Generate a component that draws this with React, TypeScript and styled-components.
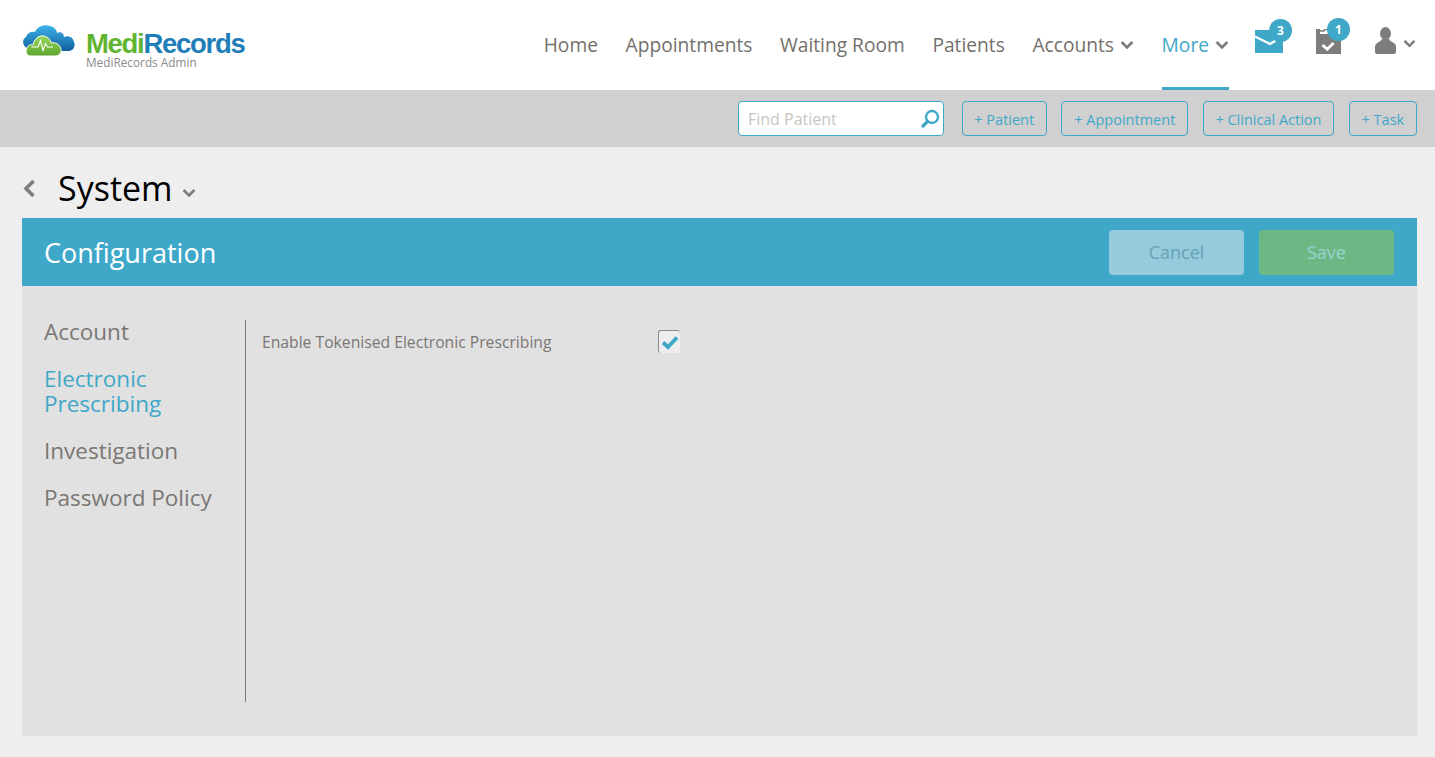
import React from 'react';
import styled, { createGlobalStyle } from 'styled-components';

const NAV_ITEMS = ['Home', 'Appointments', 'Waiting Room', 'Patients'];
const ACTIONS = ['+ Patient', '+ Appointment', '+ Clinical Action', '+ Task'];
const SIDE_ITEMS = ['Account', 'Electronic Prescribing', 'Investigation', 'Password Policy'];

const Chevron = ({ size = 14, color = '#7d7d7d' }: { size?: number; color?: string }) => (
  <svg width={size} height={size * 0.7} viewBox="0 0 14 10">
    <path d="M1.5 2 L7 7.5 L12.5 2" fill="none" stroke={color} strokeWidth="2.8" />
  </svg>
);

const App = () => {
  return (
    <Page>
      <GlobalStyle />
      <Header>
        <Logo>
          <svg width="54" height="32" viewBox="0 0 54 32">
            <defs>
              <linearGradient id="cloudBlue" x1="0" y1="0" x2="0" y2="1">
                <stop offset="0" stopColor="#3fb2e8" />
                <stop offset="1" stopColor="#0f5f9e" />
              </linearGradient>
              <linearGradient id="cloudGreen" x1="0" y1="0" x2="0" y2="1">
                <stop offset="0" stopColor="#9ad75a" />
                <stop offset="1" stopColor="#5aa62c" />
              </linearGradient>
            </defs>
            <path
              d="M5 23 C0 21 0 14 4 12 C5 8 9 6 13 7 C15 2 22 -1 28 1 C32 2 35 5 35 8 C38 6 42 8 42 12 C46 10 51 12 52 17 C54 21 51 26 46 26 L8 26 Z"
              fill="url(#cloudBlue)"
            />
            <path
              d="M9 31 C4 31 3 26 5 23 C6 20 9 19 11 20 C12 14 17 10 22 11 C26 12 29 15 29 18 C33 17 38 19 39 24 C40 28 37 31 33 31 Z"
              fill="url(#cloudGreen)"
              stroke="#ffffff"
              strokeWidth="1"
            />
            <path d="M9.5 22 H16 L18.500 15.500 L21 25.500 L23.500 18.500 L25.500 22 H31" fill="none" stroke="#ffffff" strokeWidth="1.100" />
          </svg>
          <LogoText>
            <LogoName>
              <Medi>Medi</Medi>
              <Records>Records</Records>
            </LogoName>
            <LogoSub>MediRecords Admin</LogoSub>
          </LogoText>
        </Logo>
        <Nav>
          {NAV_ITEMS.map((item) => (
            <NavItem key={item}>{item}</NavItem>
          ))}
          <NavItem>
            Accounts
            <Chevron />
          </NavItem>
          <NavItem $active>
            More
            <Chevron />
          </NavItem>
        </Nav>
        <IconGroup>
          <IconSlot>
            <svg width="28" height="23" viewBox="0 0 28 23">
              <rect width="28" height="23" fill="#3fa8c9" />
              <path d="M0 6.500 L15 14 L20.500 10.700" fill="none" stroke="#ffffff" strokeWidth="2.400" />
            </svg>
            <Badge>3</Badge>
          </IconSlot>
          <TaskSlot>
            <svg width="25" height="25" viewBox="0 0 25 25">
              <path d="M0 0 H4 V5 H25 V25 H0 Z" fill="#7d7d7d" />
              <path d="M4 2 H8 C8.500 -0.500 12 -0.500 12.500 2 H15" fill="none" stroke="#7d7d7d" strokeWidth="1.500" />
              <path d="M6.500 16 L11.300 20.300 L17.500 14" fill="none" stroke="#ffffff" strokeWidth="3" />
            </svg>
            <Badge>1</Badge>
          </TaskSlot>
          <UserSlot>
            <svg width="21" height="27" viewBox="0 0 21 27">
              <ellipse cx="10.500" cy="6.500" rx="5.500" ry="6.500" fill="#7d7d7d" />
              <path d="M7 12 H14 C15 15 20 15 21 19 V25 C21 26 20 27 19 27 H2 C1 27 0 26 0 25 V19 C1 15 6 15 7 12 Z" fill="#7d7d7d" />
            </svg>
            <UserChevron>
              <Chevron size={13} />
            </UserChevron>
          </UserSlot>
        </IconGroup>
      </Header>

      <Toolbar>
        <SearchBox>
          <SearchPlaceholder>Find Patient</SearchPlaceholder>
          <svg width="19" height="19" viewBox="0 0 19 19">
            <circle cx="11" cy="8" r="6" fill="none" stroke="#3fa8c9" strokeWidth="2.400" />
            <path d="M6.500 12.500 L2 17" stroke="#3fa8c9" strokeWidth="3.200" strokeLinecap="round" />
          </svg>
        </SearchBox>
        {ACTIONS.map((action) => (
          <ActionButton key={action}>{action}</ActionButton>
        ))}
      </Toolbar>

      <Main>
        <TitleRow>
          <svg width="13" height="19" viewBox="0 0 13 19">
            <path d="M10.500 2 L3 9.500 L10.500 17" fill="none" stroke="#7d7d7d" strokeWidth="3.600" />
          </svg>
          <Title>System</Title>
          <TitleChevron>
            <Chevron />
          </TitleChevron>
        </TitleRow>

        <Panel>
          <PanelHeader>
            <PanelTitle>Configuration</PanelTitle>
            <PanelButtons>
              <CancelButton>Cancel</CancelButton>
              <SaveButton>Save</SaveButton>
            </PanelButtons>
          </PanelHeader>
          <PanelBody>
            <SideNav>
              {SIDE_ITEMS.map((item) => (
                <SideItem key={item} $active={item === 'Electronic Prescribing'}>
                  {item}
                </SideItem>
              ))}
            </SideNav>
            <Content>
              <SettingLabel>Enable Tokenised Electronic Prescribing</SettingLabel>
              <CheckBox>
                <svg width="18" height="15" viewBox="0 0 18 15">
                  <path d="M2 7.500 L7 12 L16 2.500" fill="none" stroke="#3fa8c9" strokeWidth="3.800" />
                </svg>
              </CheckBox>
            </Content>
          </PanelBody>
        </Panel>
      </Main>
    </Page>
  );
};

export default App;

const GlobalStyle = createGlobalStyle`
  html, body {
    margin: 0;
    padding: 0;
    height: 100%;
    overflow: hidden;
  }
  body {
    font-family: 'Open Sans', sans-serif;
    background: #eeeeee;
  }
`;

const Page = styled.div`
  display: flex;
  flex-direction: column;
  width: 1435px;
  height: 757px;
  background: #eeeeee;
`;

const Header = styled.header`
  display: flex;
  align-items: stretch;
  height: 90px;
  padding: 0 19px 0 22px;
  background: #ffffff;
  box-sizing: border-box;
`;

const Logo = styled.div`
  display: flex;
  align-items: flex-start;
  gap: 10px;
  padding-top: 25px;
  margin-right: auto;
`;

const LogoText = styled.div`
  display: flex;
  flex-direction: column;
  padding-top: 7px;
`;

const LogoName = styled.div`
  font-family: 'Liberation Sans', Arial, sans-serif;
  font-size: 27.5px;
  font-weight: 700;
  line-height: 24px;
  letter-spacing: -1.3px;
`;

const Medi = styled.span`
  color: #5fb52f;
`;

const Records = styled.span`
  color: #1f7db8;
`;

const LogoSub = styled.div`
  font-size: 11.8px;
  line-height: 12px;
  color: #8a8a8a;
`;

const Nav = styled.nav`
  display: flex;
  align-items: stretch;
  gap: 27.6px;
`;

const NavItem = styled.div<{ $active?: boolean }>`
  display: flex;
  align-items: center;
  gap: 6px;
  height: 90px;
  padding-top: 2px;
  box-sizing: border-box;
  font-size: 19.2px;
  font-weight: 500;
  color: ${({ $active }) => ($active ? '#3fa8c9' : '#736f6b')};
  border-bottom: 3px solid ${({ $active }) => ($active ? '#3fa8c9' : 'transparent')};
`;

const IconGroup = styled.div`
  display: flex;
  align-items: flex-start;
  padding-top: 30px;
  margin-left: 26px;
`;

const IconSlot = styled.div`
  position: relative;
  display: flex;
  margin-right: 33px;
`;

const TaskSlot = styled(IconSlot)`
  margin-top: -1px;
  margin-right: 34px;
`;

const UserSlot = styled.div`
  display: flex;
  align-items: center;
  gap: 7px;
  margin-top: -3px;
`;

const UserChevron = styled.span`
  display: flex;
  padding-top: 6px;
`;

const Badge = styled.span`
  position: absolute;
  top: -11px;
  right: -9px;
  display: flex;
  align-items: center;
  justify-content: center;
  width: 23px;
  height: 23px;
  border-radius: 50%;
  background: #3fa8c9;
  color: #ffffff;
  font-size: 12px;
  font-weight: 700;
`;

const Toolbar = styled.div`
  display: flex;
  align-items: flex-start;
  justify-content: flex-end;
  gap: 14.5px;
  height: 57px;
  padding: 11px 18px 0 0;
  background: #d0d0d0;
  box-sizing: border-box;
`;

const SearchBox = styled.div`
  display: flex;
  align-items: center;
  justify-content: space-between;
  width: 206px;
  height: 35px;
  margin-right: 3px;
  padding: 0 3px 0 9px;
  background: #ffffff;
  border: 1px solid #3fa8c9;
  border-radius: 4px;
  box-sizing: border-box;
`;

const SearchPlaceholder = styled.span`
  font-size: 16px;
  color: #c9c5c2;
`;

const ActionButton = styled.div`
  display: flex;
  align-items: center;
  height: 35px;
  padding: 1px 11.8px 0;
  border: 1px solid #3fa8c9;
  border-radius: 4px;
  box-sizing: border-box;
  font-size: 14.5px;
  color: #3fa8c9;
`;

const Main = styled.main`
  display: flex;
  flex-direction: column;
  flex: 1;
  padding: 0 18px 21px 22px;
`;

const TitleRow = styled.div`
  display: flex;
  align-items: center;
  height: 71px;
  padding: 12px 0 0 1px;
  box-sizing: border-box;
`;

const Title = styled.h1`
  margin: 0 9px 0 22px;
  font-size: 34px;
  font-weight: 400;
  line-height: 59px;
  color: #000000;
`;

const TitleChevron = styled.span`
  display: flex;
  padding-top: 9px;
`;

const Panel = styled.section`
  display: flex;
  flex-direction: column;
  flex: 1;
  background: #e1e1e1;
`;

const PanelHeader = styled.div`
  display: flex;
  align-items: center;
  justify-content: space-between;
  height: 68px;
  padding: 0 23px 0 22px;
  background: #3fa8c9;
`;

const PanelTitle = styled.h2`
  margin: 1px 0 0;
  font-size: 27px;
  font-weight: 400;
  color: #ffffff;
`;

const PanelButtons = styled.div`
  display: flex;
  gap: 15px;
  margin-top: 1px;
`;

const PanelButton = styled.div`
  display: flex;
  align-items: center;
  justify-content: center;
  width: 135px;
  height: 45px;
  padding-bottom: 2px;
  box-sizing: border-box;
  border-radius: 4px;
  font-size: 18px;
`;

const CancelButton = styled(PanelButton)`
  background: #96cbdc;
  color: #65a2b6;
`;

const SaveButton = styled(PanelButton)`
  background: #6cb884;
  color: #9ad2d0;
`;

const PanelBody = styled.div`
  display: flex;
  flex: 1;
  align-items: flex-start;
  padding: 34px 0;
`;

const SideNav = styled.nav`
  display: flex;
  flex-direction: column;
  gap: 22px;
  width: 224px;
  height: 382px;
  padding: 0 22px;
  border-right: 1px solid #7d7d7d;
  box-sizing: border-box;
`;

const SideItem = styled.div<{ $active?: boolean }>`
  margin-top: -1px;
  margin-bottom: 1px;
  font-size: 22.5px;
  line-height: 25px;
  color: ${({ $active }) => ($active ? '#3fa8c9' : '#7b7773')};
`;

const Content = styled.div`
  display: flex;
  align-items: center;
  padding: 10px 0 0 16px;
`;

const SettingLabel = styled.div`
  width: 396px;
  font-size: 15.7px;
  color: #7b7773;
`;

const CheckBox = styled.div`
  display: flex;
  align-items: center;
  justify-content: center;
  width: 22px;
  height: 23px;
  background: #eeeeee;
  border-top: 1px solid #8a8a8a;
  border-left: 1px solid #8a8a8a;
  border-radius: 3px;
  box-sizing: border-box;
`;
